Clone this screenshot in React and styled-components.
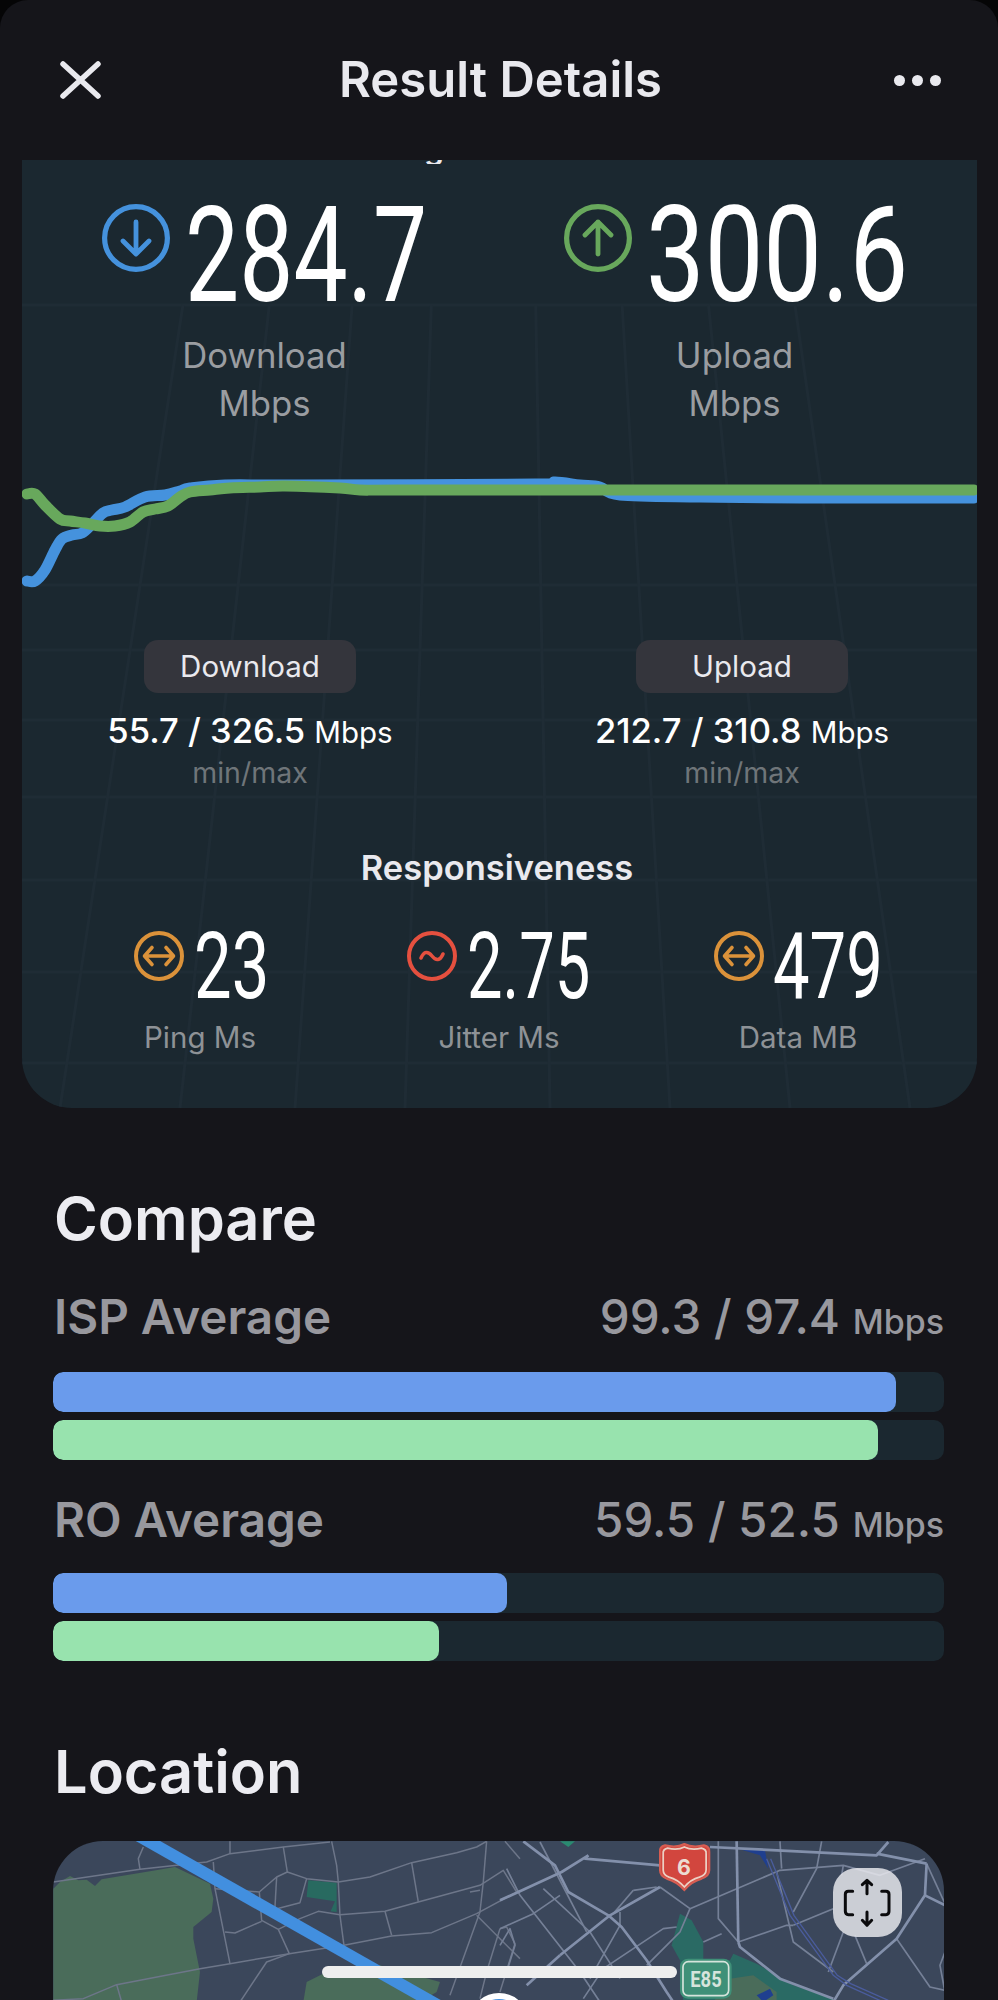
import React from 'react'
import styled, { createGlobalStyle } from 'styled-components'

const Global = createGlobalStyle`
  html, body { margin: 0; padding: 0; background: #050506; }
  body { font-family: 'Inter', 'Liberation Sans', sans-serif; }
`

const Phone = styled.div`
  position: relative;
  width: 998px;
  height: 2000px;
  overflow: hidden;
  background: #15151a;
  border-radius: 28px 28px 0 0;
`

const Header = styled.header`
  height: 160px;
  padding: 0 57px 0 60px;
  display: flex;
  align-items: center;
  justify-content: space-between;
`

const HeaderTitle = styled.h1`
  margin: 0 0 0 6px;
  font-size: 49px;
  line-height: 54px;
  font-weight: 600;
  color: #e9e9ee;
`

const Dots = styled.div`
  display: flex;
  gap: 7px;
`

const Dot = styled.span`
  width: 11px;
  height: 11px;
  border-radius: 50%;
  background: #e9e9ee;
`

const Card = styled.section`
  position: relative;
  width: 955px;
  height: 948px;
  margin-left: 22px;
  overflow: hidden;
  background: #1b2830;
  border-radius: 0 0 50px 50px;
`

const GridLines = styled.svg`
  position: absolute;
  inset: 0;
`

const CutTitle = styled.div`
  position: relative;
  height: 4px;
  padding-left: 402px;
  overflow: hidden;
  font-size: 32px;
  font-weight: 600;
  line-height: 32px;
  color: #e9e9ee;
  span {
    display: block;
    margin-top: -28px;
  }
`

const Heroes = styled.div`
  position: relative;
  display: grid;
  grid-template-columns: repeat(2, 470px);
  justify-content: center;
  margin-top: 40px;
`

const Hero = styled.div`
  display: flex;
  flex-direction: column;
  align-items: center;
`

const HeroRow = styled.div`
  display: flex;
  align-items: flex-start;
  gap: ${p => p.$gap}px;
`

const Big = styled.span`
  display: block;
  width: ${p => p.$w}px;
  height: ${p => p.$size * 0.78}px;
  font-family: 'Roboto', 'Liberation Sans', sans-serif;
  font-size: ${p => p.$size}px;
  font-weight: 400;
  line-height: ${p => p.$size * 0.78}px;
  color: #fff;
  white-space: nowrap;
  transform: scaleX(${p => p.$sx});
  transform-origin: left top;
`

const HeroLabel = styled.div`
  margin-top: ${p => p.$top || 0}px;
  font-size: 34.7px;
  line-height: 48px;
  color: #9a9da1;
  text-align: center;
`

const Chart = styled.svg`
  position: relative;
  display: block;
  margin-top: 43px;
`

const Ranges = styled.div`
  position: relative;
  display: grid;
  grid-template-columns: repeat(2, 400px);
  column-gap: 92px;
  justify-content: center;
  padding-right: 7px;
  margin-top: 40px;
`

const Range = styled.div`
  display: flex;
  flex-direction: column;
  align-items: center;
`

const Pill = styled.div`
  width: 212px;
  height: 53px;
  border-radius: 14px;
  background: #34353c;
  display: flex;
  align-items: center;
  justify-content: center;
  font-size: 29.5px;
  color: #e9e9ee;
`

const RangeValue = styled.div`
  margin-top: 15px;
  font-size: 34.6px;
  line-height: 44px;
  font-weight: 500;
  color: #fff;
  white-space: nowrap;
  small {
    font-size: 29.5px;
    font-weight: 400;
  }
`

const RangeNote = styled.div`
  margin-top: 0;
  font-size: 28.5px;
  line-height: 38px;
  color: #6f7579;
`

const RespTitle = styled.h2`
  position: relative;
  margin: 55px 0 0;
  padding-right: 5px;
  font-size: 34.5px;
  line-height: 42px;
  font-weight: 600;
  color: #e9e9ee;
  text-align: center;
`

const Stats = styled.div`
  position: relative;
  display: grid;
  grid-template-columns: repeat(3, 299px);
  justify-content: center;
  margin-top: 42px;
  padding-right: 1px;
`

const Stat = styled.div`
  display: flex;
  flex-direction: column;
  align-items: center;
`

const StatLabel = styled.div`
  margin-top: 15px;
  font-size: 29.5px;
  line-height: 38px;
  color: #8e9296;
`

const Content = styled.main`
  padding: 0 54px 0 53px;
`

const SectionTitle = styled.h2`
  margin: ${p => p.$top}px 0 0 1px;
  font-size: 59.5px;
  line-height: 66px;
  font-weight: 600;
  color: #ececf1;
`

const CompareHead = styled.div`
  display: flex;
  align-items: baseline;
  justify-content: space-between;
  margin-top: ${p => p.$top}px;
  color: #98989e;
`

const CompareName = styled.span`
  margin-left: 1px;
  font-size: 47.6px;
  line-height: 54px;
  font-weight: 600;
`

const CompareValue = styled.span`
  font-size: 47.5px;
  line-height: 54px;
  font-weight: 500;
  small {
    font-size: 34px;
  }
`

const Track = styled.div`
  height: 40px;
  margin-top: ${p => p.$top}px;
  border-radius: 10px;
  overflow: hidden;
  background: #1b2830;
`

const Fill = styled.div`
  height: 100%;
  border-radius: 10px;
  background: ${p => (p.$kind === 'down' ? '#6a9bec' : '#98e3ae')};
`

const MapBox = styled.div`
  position: relative;
  height: 161px;
  margin-top: 37px;
  overflow: hidden;
  border-radius: 50px 50px 0 0;
  background: #3b475b;
  svg {
    display: block;
  }
`

const ExpandButton = styled.div`
  position: absolute;
  top: 27px;
  right: 42px;
  width: 69px;
  height: 69px;
  border-radius: 24px;
  background: rgba(236, 236, 240, 0.82);
`

const HomeBar = styled.div`
  position: absolute;
  left: 322px;
  bottom: 22px;
  width: 355px;
  height: 12px;
  border-radius: 6px;
  background: #eeeeee;
`

// smooth line through points, catmull-rom turned into cubic beziers
const smooth = pts => {
  let d = `M${pts[0][0]},${pts[0][1]}`
  for (let i = 0; i < pts.length - 1; i++) {
    const p0 = pts[i - 1] || pts[i]
    const p1 = pts[i]
    const p2 = pts[i + 1]
    const p3 = pts[i + 2] || p2
    const c1 = [p1[0] + (p2[0] - p0[0]) / 6, p1[1] + (p2[1] - p0[1]) / 6]
    const c2 = [p2[0] - (p3[0] - p1[0]) / 6, p2[1] - (p3[1] - p1[1]) / 6]
    d += `C${c1[0]},${c1[1]} ${c2[0]},${c2[1]} ${p2[0]},${p2[1]}`
  }
  return d
}

const bluePts = [[27,581],[35,581],[45,570],[55,550],[62,539],[72,535],[82,533],[92,524],[103,513],[112,510],[125,507],[145,497],[165,495],[180,491],[190,488],[225,485],[300,485],[535,484],[555,482],[580,485],[600,487],[620,495],[700,497],[800,498],[974,498]]
const greenPts = [[27,494],[35,494],[45,505],[60,519],[70,521],[85,523],[100,526],[115,526],[130,522],[143,512],[155,509],[168,506],[180,497],[190,492],[210,490],[230,488],[260,487],[285,486],[340,488],[360,490],[400,490],[600,490],[974,490]]

const gridY = [145, 425, 490, 560, 637, 720, 812, 903]
const gridX = [38, 158, 273, 383, 528, 648, 768, 888]

const Backdrop = () => (
  <GridLines width="955" height="948" viewBox="0 0 955 948">
    <g stroke="#1f2c35" strokeWidth="3" fill="none">
      {gridY.map(y => <line key={y} x1="0" y1={y} x2="955" y2={y} />)}
      {gridX.map(x => (
        <line key={x} x1={477 + (x - 477) * 0.72} y1="145" x2={x} y2="948" />
      ))}
    </g>
  </GridLines>
)

const ArrowCircle = ({ color, up }) => (
  <svg width="68" height="68" viewBox="0 0 68 68" fill="none" stroke={color} strokeLinecap="round" strokeLinejoin="round" style={{ flex: 'none' }}>
    <circle cx="34" cy="34" r="31.4" strokeWidth="5.2" />
    {up
      ? <path d="M34,50 V18 M21,31 L34,18 L47,31" strokeWidth="4.8" />
      : <path d="M34,18 V50 M21,37 L34,50 L47,37" strokeWidth="4.8" />}
  </svg>
)

const SmallCircle = ({ color, kind }) => (
  <svg width="50" height="50" viewBox="0 0 50 50" fill="none" stroke={color} strokeLinecap="round" strokeLinejoin="round" style={{ flex: 'none' }}>
    <circle cx="25" cy="25" r="23" strokeWidth="4" />
    {kind === 'wave'
      ? <path d="M14,27 C17,20 21,20 25,25 C29,30 33,30 36,23" strokeWidth="3.6" />
      : <path d="M11,25 H39 M18,16.5 L10.5,25 L18,33.5 M32,16.5 L39.5,25 L32,33.5" strokeWidth="3.6" />}
  </svg>
)

// map traced in crop units, 1 real px = 3 units
const roadsLeft = [
  '40,150 300,112 500,90 570,65 730,45 870,30',
  '570,28 570,65',
  '310,45 295,80 300,112',
  '730,45 742,120',
  '875,28 890,100 895,150 900,250 912,340',
  '895,150 990,135 1115,92 1250,62 1310,45 1340,28',
  '1115,92 1135,210',
  '658,180 710,135 742,120 800,140 895,150',
  '710,135 705,225',
  '800,140 780,212 705,232',
  '520,90 525,170 570,395',
  '525,170 658,180 665,265 715,292 748,365',
  '555,300 585,303 665,268',
  '715,292 780,260 835,238 900,248 1035,238 1135,210 1320,160 1390,115 1430,180',
  '1035,238 1055,310',
  '480,410 570,395 748,365 912,340 1055,312 1175,302 1310,245 1440,175',
  '40,505 130,500 230,458 480,410',
  '600,510 680,390 748,365',
  '230,458 245,510',
  '1340,28 1330,150 1320,240 1230,490',
  '1310,250 1440,380',
  '1380,290 1400,285 1425,335 1380,480',
  '1380,290 1340,420 1320,500',
  '1395,28 1440,80',
  '1290,180 1320,175',
]

const roadsRightThin = [
  '20,110 60,190 240,420 300,510',
  '130,170 270,300 360,440',
  '120,30 260,300',
  '0,290 100,245 180,190',
  '0,340 30,290 45,340 20,420',
  '360,240 360,280 270,440',
  '400,175 470,165',
  '400,175 340,245',
  '250,500 310,410 490,290 530,285',
  '480,165 570,230 540,300 500,340 440,400',
  '655,28 655,260 715,330',
  '840,28 845,110',
  '965,28 950,110 880,240',
  '570,230 840,115 1030,100 1140,130 1275,80',
  '1030,100 1025,130',
  '715,330 860,280 880,280',
  '610,330 665,305',
  '880,280 1000,230',
  '1030,300 985,420',
  '1190,320 1290,465 1335,475',
  '1280,95 1335,215',
  '1065,310 1100,395',
  '830,120 880,330 1000,420',
  '1335,360 1320,400 1335,480',
]

const roadsRightWide = [
  '70,28 165,100 205,180 325,250 365,285 440,385 500,480 520,510',
  '0,205 55,180 185,120 265,70',
  '265,70 255,80 480,100',
  '180,370 330,250 480,165',
  '180,370 80,460',
  '630,45 1130,70 1165,30',
  '1130,65 1280,95',
  '710,28 715,330',
  '715,330 720,345 840,440 1000,500',
  '1280,95 1275,190 1190,320 1030,460 1000,510',
  '1275,190 1335,220',
]

const shield = 'M480,60 Q478,44 495,40 Q530,48 553,36 Q578,48 612,40 Q630,44 628,60 L628,115 Q628,132 605,140 Q575,148 553,174 Q530,148 500,140 Q480,132 480,115 Z'

const MapArt = () => (
  <svg width="891" height="161" viewBox="53 1839 891 161">
    <g transform="translate(40 1830) scale(0.3333)">
      <path d="M40,170 L60,150 L90,132 L115,145 L140,143 L165,162 L185,142 L330,118 L405,105 L510,155 L520,200 L515,240 L460,285 L460,320 L480,420 L470,510 L40,510 Z" fill="#4a6c5a" />
      <path d="M790,510 L800,450 L860,420 L1020,400 L1200,450 L1190,480 L1140,510 Z" fill="#4a6c5a" />
      <path d="M805,145 L890,152 L890,240 L872,238 L885,208 L800,195 Z" fill="#286a60" />
      <g fill="none" stroke="#6d7689" strokeWidth="4.5" strokeLinejoin="round">
        {roadsLeft.map(p => <polyline key={p} points={p} />)}
      </g>
    </g>
    <g transform="translate(500 1830) scale(0.3333)">
      <path d="M540,245 L575,265 L610,330 L610,385 L540,385 L515,340 Z" fill="#2a6a64" />
      <path d="M700,365 L770,395 L880,460 L1000,500 L1000,510 L550,510 L540,385 L690,385 Z" fill="#2a6a64" />
      <path d="M690,440 L760,430 L830,480 L830,510 L640,510 Z" fill="#4a6c5a" />
      <path d="M770,490 L810,470 L820,490 L790,510 Z" fill="#1f3f8f" />
      <path d="M720,52 L795,55 L805,110 L780,70 Z" fill="#1f3f8f" />
      <path d="M180,28 L225,28 L205,45 Z" fill="#2a8a70" />
      <g fill="none" stroke="#758097" strokeWidth="5" strokeLinejoin="round">
        {roadsRightThin.map(p => <polyline key={p} points={p} />)}
      </g>
      <g fill="none" stroke="#8390ab" strokeWidth="8" strokeLinejoin="round">
        {roadsRightWide.map(p => <polyline key={p} points={p} />)}
      </g>
      <g fill="none" stroke="#4a5c9c" strokeWidth="4">
        <polyline points="800,80 870,250 1000,430 1040,460 1150,510" />
        <polyline points="812,80 882,250 1012,430 1052,455 1165,505" />
      </g>
    </g>
    <line x1="95" y1="1809" x2="485" y2="2030" stroke="#428fdf" strokeWidth="12" />
    <circle cx="499" cy="2021" r="27" fill="#428fdf" stroke="#fff" strokeWidth="6" />
    <g transform="translate(500 1830) scale(0.3333)">
      <path d={shield} fill="#d2463e" stroke="#d65d52" strokeWidth="6" />
      <path d={shield} transform="translate(554 105) scale(0.87) translate(-554 -105)" fill="none" stroke="#ecd0c4" strokeWidth="6" />
      <text x="552" y="128" textAnchor="middle" fontFamily="Inter, sans-serif" fontSize="64" fontWeight="700" fill="#ecdcd3">6</text>
      <rect x="540" y="380" width="155" height="120" rx="24" fill="#3f9078" />
      <rect x="549" y="389" width="137" height="102" rx="16" fill="none" stroke="#d6e4dc" strokeWidth="5" />
      <text x="618" y="466" textAnchor="middle" fontFamily="Roboto, sans-serif" fontSize="68" fontWeight="700" fill="#d6e4dc" textLength="94" lengthAdjust="spacingAndGlyphs">E85</text>
    </g>
  </svg>
)

const Bar = ({ kind, pct, top }) => (
  <Track $top={top}>
    <Fill $kind={kind} style={{ width: `${pct}%` }} />
  </Track>
)

export default function App() {
  return (
    <Phone>
      <Global />
      <Header>
        <svg width="41" height="38" viewBox="0 0 41 38" fill="none" stroke="#e9e9ee" strokeWidth="5.5" strokeLinecap="round">
          <path d="M3,3 L38,35 M38,3 L3,35" />
        </svg>
        <HeaderTitle>Result Details</HeaderTitle>
        <Dots><Dot /><Dot /><Dot /></Dots>
      </Header>

      <Card>
        <Backdrop />
        <CutTitle><span>g</span></CutTitle>
        <Heroes>
          <Hero>
            <HeroRow $gap={15}>
              <ArrowCircle color="#4592dd" />
              <Big $size={133} $sx={0.725} $w={242}>284.7</Big>
            </HeroRow>
            <HeroLabel $top={23}>Download<br />Mbps</HeroLabel>
          </Hero>
          <Hero>
            <HeroRow $gap={14}>
              <ArrowCircle color="#68a85c" up />
              <Big $size={133} $sx={0.785} $w={259}>300.6</Big>
            </HeroRow>
            <HeroLabel $top={23}>Upload<br />Mbps</HeroLabel>
          </Hero>
        </Heroes>

        <Chart width="955" height="130" viewBox="22 470 955 130" fill="none" strokeWidth="11" strokeLinecap="round" strokeLinejoin="round">
          <path d={smooth(bluePts)} stroke="#4592dd" />
          <path d={smooth(greenPts)} stroke="#68a85c" />
        </Chart>

        <Ranges>
          <Range>
            <Pill>Download</Pill>
            <RangeValue>55.7 / 326.5 <small>Mbps</small></RangeValue>
            <RangeNote>min/max</RangeNote>
          </Range>
          <Range>
            <Pill>Upload</Pill>
            <RangeValue>212.7 / 310.8 <small>Mbps</small></RangeValue>
            <RangeNote>min/max</RangeNote>
          </Range>
        </Ranges>

        <RespTitle>Responsiveness</RespTitle>
        <Stats>
          <Stat>
            <HeroRow $gap={10}>
              <SmallCircle color="#db923a" />
              <Big $size={93} $sx={0.72} $w={72}>23</Big>
            </HeroRow>
            <StatLabel>Ping Ms</StatLabel>
          </Stat>
          <Stat>
            <HeroRow $gap={10}>
              <SmallCircle color="#e5503f" kind="wave" />
              <Big $size={93} $sx={0.68} $w={124}>2.75</Big>
            </HeroRow>
            <StatLabel>Jitter Ms</StatLabel>
          </Stat>
          <Stat>
            <HeroRow $gap={9}>
              <SmallCircle color="#db923a" />
              <Big $size={93} $sx={0.7} $w={109}>479</Big>
            </HeroRow>
            <StatLabel>Data MB</StatLabel>
          </Stat>
        </Stats>
      </Card>

      <Content>
        <SectionTitle $top={77}>Compare</SectionTitle>
        <CompareHead $top={39}>
          <CompareName>ISP Average</CompareName>
          <CompareValue>99.3 / 97.4 <small>Mbps</small></CompareValue>
        </CompareHead>
        <Bar kind="down" pct={94.6} top={23} />
        <Bar kind="up" pct={92.6} top={8} />
        <CompareHead $top={33}>
          <CompareName>RO Average</CompareName>
          <CompareValue>59.5 / 52.5 <small>Mbps</small></CompareValue>
        </CompareHead>
        <Bar kind="down" pct={51} top={21} />
        <Bar kind="up" pct={43.3} top={8} />
        <SectionTitle $top={77}>Location</SectionTitle>
        <MapBox>
          <MapArt />
          <ExpandButton>
            <svg width="69" height="69" viewBox="0 0 205 207" fill="none" stroke="#0b0b0d" strokeWidth="9" strokeLinecap="round" strokeLinejoin="round">
              <path d="M58,70 H45 Q36,70 36,79 V130 Q36,140 45,140 H58 M145,70 H158 Q167,70 167,79 V130 Q167,140 158,140 H145" />
              <path d="M101,77 V37 M87,50 L101,37 L115,50 M101,132 V172 M87,157 L101,172 L115,157" />
            </svg>
          </ExpandButton>
        </MapBox>
      </Content>

      <HomeBar />
    </Phone>
  )
}
